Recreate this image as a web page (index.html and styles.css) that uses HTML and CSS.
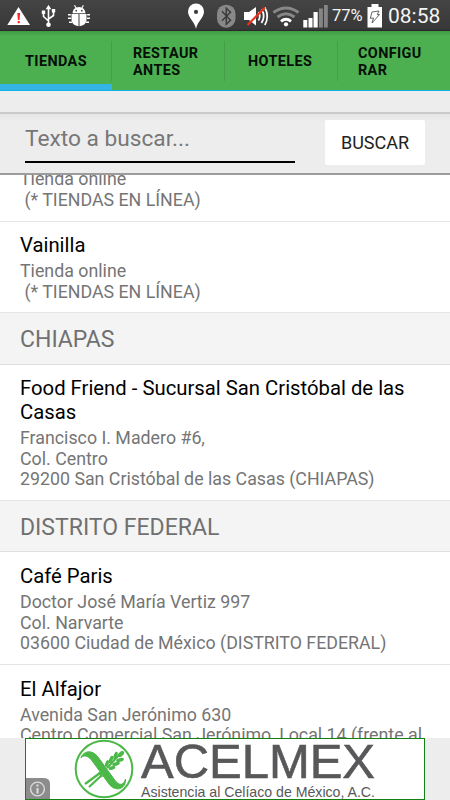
FILE: index.html
```html
<!DOCTYPE html>
<html lang="es">
<head>
<meta charset="utf-8">
<title>Tiendas</title>
<link rel="stylesheet" href="styles.css">
</head>
<body>
<div class="screen">
  <header class="status">
    <svg class="status-icons" width="330" height="31" viewBox="0 0 330 31">
      <path d="M18.5 7 30 25H7.3z" fill="#fff"/>
      <path d="M17.300 13h2.800l-.6 7h-1.600zM17.700 21h2v2.200h-2z" fill="#f22"/>
      <g fill="none" stroke="#fff" stroke-width="1.600">
        <path d="M48.500 8v16M43.500 13v3.500l5 4.500M53.500 11v4.500l-5 3.500"/>
      </g>
      <path d="m48.500 4.800 2.800 4.400h-5.600zM41.800 10.500h3.400v3.500h-3.400zM51.800 9h3.400v3.500h-3.400z" fill="#fff"/>
      <circle cx="48.500" cy="24.700" r="2.300" fill="#fff"/>
      <g fill="#fff">
        <path d="M72.500 13.200q.3-4 3-5.300l-1.500-2.200.9-.6 1.700 2.300q2.400-.7 4.800 0L83 5.100l.9.600-1.500 2.200q2.700 1.300 3.100 5.300z"/>
        <path d="M71.500 14h7v12.200q-6-.7-7-6zM79.500 14h7v6.200q-1 5.300-7 6z"/>
        <path d="M68 14h2.800v1.500H68zM68 17.500h3V19h-3zM69 21.500h3V23h-3zM87.200 14H90v1.500h-2.800zM87 17.500h3V19h-3zM86 21.500h3V23h-3z"/>
      </g>
      <circle cx="76.200" cy="10.700" r=".9" fill="#444"/><circle cx="81.800" cy="10.700" r=".9" fill="#444"/>
      <path fill="#fff" fill-rule="evenodd" d="M196 3.500a8 8 0 0 1 8 8c0 6-6.500 10-8 17.200-1.500-7.200-8-11.200-8-17.200a8 8 0 0 1 8-8zm0 6.300a2.100 2.100 0 1 0 0 4.200 2.100 2.100 0 0 0 0-4.200z"/>
      <rect x="217" y="4.700" width="18.500" height="23" rx="9" fill="#888"/>
      <path d="m222 11.300 8.500 9-4.200 4V8.300l4.200 4-8.500 8.500" fill="none" stroke="#3c3c3c" stroke-width="1.500"/>
      <path d="M244 12h5l7-5v18.500l-7-5.500h-5z" fill="#fff"/>
      <path d="M258.500 12q2.500 4 0 8.500M261.500 9.500q4.500 6.500 0 13.500M264.800 7.500q5 9 0 17.500" fill="none" stroke="#fff" stroke-width="1.700"/>
      <path d="M247.500 25 265 7.500" stroke="#f03218" stroke-width="2"/>
      <g fill="none" stroke-width="3">
        <path d="M273.500 12.500q12.500-9 25 0" stroke="#888"/>
        <path d="M277.500 17q8.500-6.500 17 0" stroke="#888"/>
        <path d="M281 21.300q5-4 10 0" stroke="#fff"/>
      </g>
      <circle cx="286" cy="24.300" r="2.100" fill="#fff"/>
      <path d="M303.300 20h4v7.500h-4zM308.500 18h4v9.500h-4zM313.500 12h4.200v15.500h-4.200z" fill="#fff"/>
      <path d="M318.900 8.500h4v19h-4zM324 5h3.800v22.500H324z" fill="#858585"/>
    </svg>
    <span class="percent">77%</span>
    <svg class="battery" width="16" height="25" viewBox="0 0 16 25">
      <path d="M4.500 1h7v3H15v20.500H.5V4h4z" fill="#fff"/>
      <path d="m5 9 7-1-1.800 3.700 2.300-.2L5 20l1.500-5-3.200.3z" fill="#fff" stroke="#555" stroke-width=".9"/>
    </svg>
    <span class="clock">08:58</span>
  </header>
  <nav class="tabs">
    <div class="tab active"><span>TIENDAS</span></div>
    <div class="tab restaurants"><span>RESTAUR<br>ANTES</span></div>
    <div class="tab hotels"><span>HOTELES</span></div>
    <div class="tab settings"><span>CONFIGU<br>RAR</span></div>
  </nav>
  <div class="spacer"></div>
  <form class="search">
    <div class="field">Texto a buscar...</div>
    <button class="submit" type="button">BUSCAR</button>
  </form>
  <main class="list">
    <article class="row clipped">
      <p class="info">Tienda online<br>&nbsp;(* TIENDAS EN LÍNEA)</p>
    </article>
    <article class="row short">
      <h3 class="name">Vainilla</h3>
      <p class="info">Tienda online<br>&nbsp;(* TIENDAS EN LÍNEA)</p>
    </article>
    <h2 class="region">CHIAPAS</h2>
    <article class="row tall">
      <h3 class="name">Food Friend - Sucursal San Cristóbal de las Casas</h3>
      <p class="info">Francisco I. Madero #6,<br>Col. Centro<br>29200 San Cristóbal de las Casas (CHIAPAS)</p>
    </article>
    <h2 class="region compact">DISTRITO FEDERAL</h2>
    <article class="row medium">
      <h3 class="name">Café Paris</h3>
      <p class="info">Doctor José María Vertiz 997<br>Col. Narvarte<br>03600 Ciudad de México (DISTRITO FEDERAL)</p>
    </article>
    <article class="row medium">
      <h3 class="name">El Alfajor</h3>
      <p class="info">Avenida San Jerónimo 630<br>Centro Comercial San Jerónimo, Local 14 (frente al</p>
    </article>
  </main>
  <footer class="ad">
    <div class="banner">
      <svg class="emblem" width="60" height="60" viewBox="0 0 60 60">
        <circle cx="30" cy="30" r="28.300" fill="none" stroke="#4cb848" stroke-width="2"/>
        <path d="M7 19C9 12 18 10 24 18L40 40C44 46 49 48 51.500 40C52 51 41 53 35 45L19 23C15 17 10 15 7 19z" fill="#4cb848" stroke="#4cb848" stroke-width="1"/>
        <path d="m33 29 13-14M26 34 11 45M28 36 15 48M25 33l3 5" fill="none" stroke="#4cb848" stroke-width="2.200"/>
        <g fill="#4cb848">
          <ellipse cx="47" cy="15" rx="3.700" ry="2.200" transform="rotate(-45 47 15)"/>
          <ellipse cx="41.500" cy="16.500" rx="4" ry="1.800" transform="rotate(-70 41.500 16.500)"/>
          <ellipse cx="37" cy="20.500" rx="4" ry="1.800" transform="rotate(-70 37 20.500)"/>
          <ellipse cx="33" cy="24.500" rx="3.500" ry="1.700" transform="rotate(-70 33 24.500)"/>
          <ellipse cx="46" cy="21" rx="4" ry="1.800" transform="rotate(-15 46 21)"/>
          <ellipse cx="42" cy="25" rx="4" ry="1.800" transform="rotate(-15 42 25)"/>
          <ellipse cx="38" cy="29" rx="3.500" ry="1.700" transform="rotate(-15 38 29)"/>
        </g>
      </svg>
      <svg class="wordmark" width="240" height="60" viewBox="0 0 240 60">
        <text class="brand" x="1" y="38.500" textLength="234" lengthAdjust="spacingAndGlyphs">ACELMEX</text>
        <text class="slogan" x="1" y="58" textLength="234" lengthAdjust="spacingAndGlyphs">Asistencia al Celíaco de México, A.C.</text>
      </svg>
      <svg class="ad-info" width="24" height="21" viewBox="0 0 24 21">
        <path d="M0 0h18q6 0 6 6v15H0z" fill="#8c8c8c"/>
        <circle cx="11.500" cy="11" r="6.900" fill="none" stroke="#ddd" stroke-width="1.400"/>
        <path d="M10.500 6.500h2v2h-2zM10.500 10h2v5.500h-2z" fill="#ddd"/>
      </svg>
    </div>
  </footer>
</div>
</body>
</html>
```
FILE: styles.css
```css
* { box-sizing: border-box; }
body {
  margin: 0;
  background: #ededed;
  font-family: Roboto, "Liberation Sans", sans-serif;
}
h2, h3, p { margin: 0; font-weight: 400; }
.screen {
  width: 450px;
  height: 800px;
  display: flex;
  flex-direction: column;
  overflow: hidden;
}
.status {
  height: 31px;
  flex: none;
  display: flex;
  align-items: flex-start;
  color: #f4f4f4;
  background: linear-gradient(#444, #383838 94%, #252525);
}
.status-icons { flex: none; }
.percent {
  width: 33px;
  margin-left: 2px;
  font-size: 16.500px;
  line-height: 32px;
}
.battery { flex: none; margin: 3px 0 0 2px; }
.clock {
  margin-left: 5px;
  font-size: 21px;
  line-height: 32px;
}
.tabs {
  height: 60px;
  flex: none;
  display: grid;
  grid-template-columns: 112px 113px 113px 112px;
  background: linear-gradient(#3f9a43, #4caf50 5px);
  border-bottom: 1.500px solid #0fb1e7;
}
.tab {
  display: flex;
  align-items: center;
  padding-top: 2px;
  font-size: 14.400px;
  font-weight: 700;
  line-height: 17px;
  letter-spacing: .4px;
  color: #071007;
  background: linear-gradient(#449e48, #449e48) right 10px / 1px 40px no-repeat;
}
.tab.active {
  padding-left: 25px;
  box-shadow: inset 0 -6px #33b5e5;
}
.restaurants { padding-left: 21px; }
.hotels { padding-left: 23px; }
.settings { padding-left: 20px; background: none; }
.spacer {
  height: 21px;
  flex: none;
  background: #ededed;
}
.search {
  height: 63px;
  flex: none;
  display: flex;
  justify-content: space-between;
  padding: 6px 25px 0;
  border-top: 2px solid #cacaca;
  border-bottom: 2px solid #9c9c9c;
  background: linear-gradient(#e5e5e5, #ededed 7px);
}
.field {
  width: 270px;
  height: 43px;
  border-bottom: 2px solid #000;
  font-size: 22.700px;
  line-height: 37px;
  color: #777;
}
.submit {
  width: 100px;
  height: 45px;
  padding: 0;
  border: 0;
  border-radius: 2px;
  background: #fff;
  font: 400 18px/45px Roboto, sans-serif;
  color: #222;
}
.list {
  height: 563px;
  flex: none;
  overflow: hidden;
  background: #fff;
}
.row {
  padding: 11px 20px 0;
  border-bottom: 1px solid #e4e4e4;
}
.row.clipped { height: 53px; padding-top: 0; }
.row.clipped .info { margin-top: -6px; }
.row.short { height: 91px; }
.row.tall { height: 136px; }
.row.medium { height: 112.500px; padding-top: 12px; }
.name {
  font-size: 20.300px;
  line-height: 24px;
  color: #000;
}
.info {
  margin-top: 4px;
  font-size: 17.800px;
  line-height: 20.600px;
  color: #757575;
  white-space: nowrap;
}
.region {
  height: 52px;
  padding-left: 20px;
  border-bottom: 1px solid #e0e0e0;
  background: #f4f4f4;
  font-size: 23px;
  line-height: 53px;
  color: #707070;
}
.region.compact { height: 51px; }
.ad {
  height: 62px;
  flex: none;
  display: flex;
  justify-content: center;
}
.banner {
  position: relative;
  width: 400px;
  display: flex;
  padding-left: 48px;
  border: 1px solid #128112;
  background: #fff;
}
.wordmark { margin-left: 6px; }
.brand {
  font: 400 48px "Liberation Sans", Arial, sans-serif;
  fill: #58585a;
  stroke: #58585a;
  stroke-width: .6px;
}
.slogan {
  font: 400 14.500px "Liberation Sans", Arial, sans-serif;
  fill: #58585a;
}
.ad-info {
  position: absolute;
  left: 0;
  bottom: 0;
}
```
